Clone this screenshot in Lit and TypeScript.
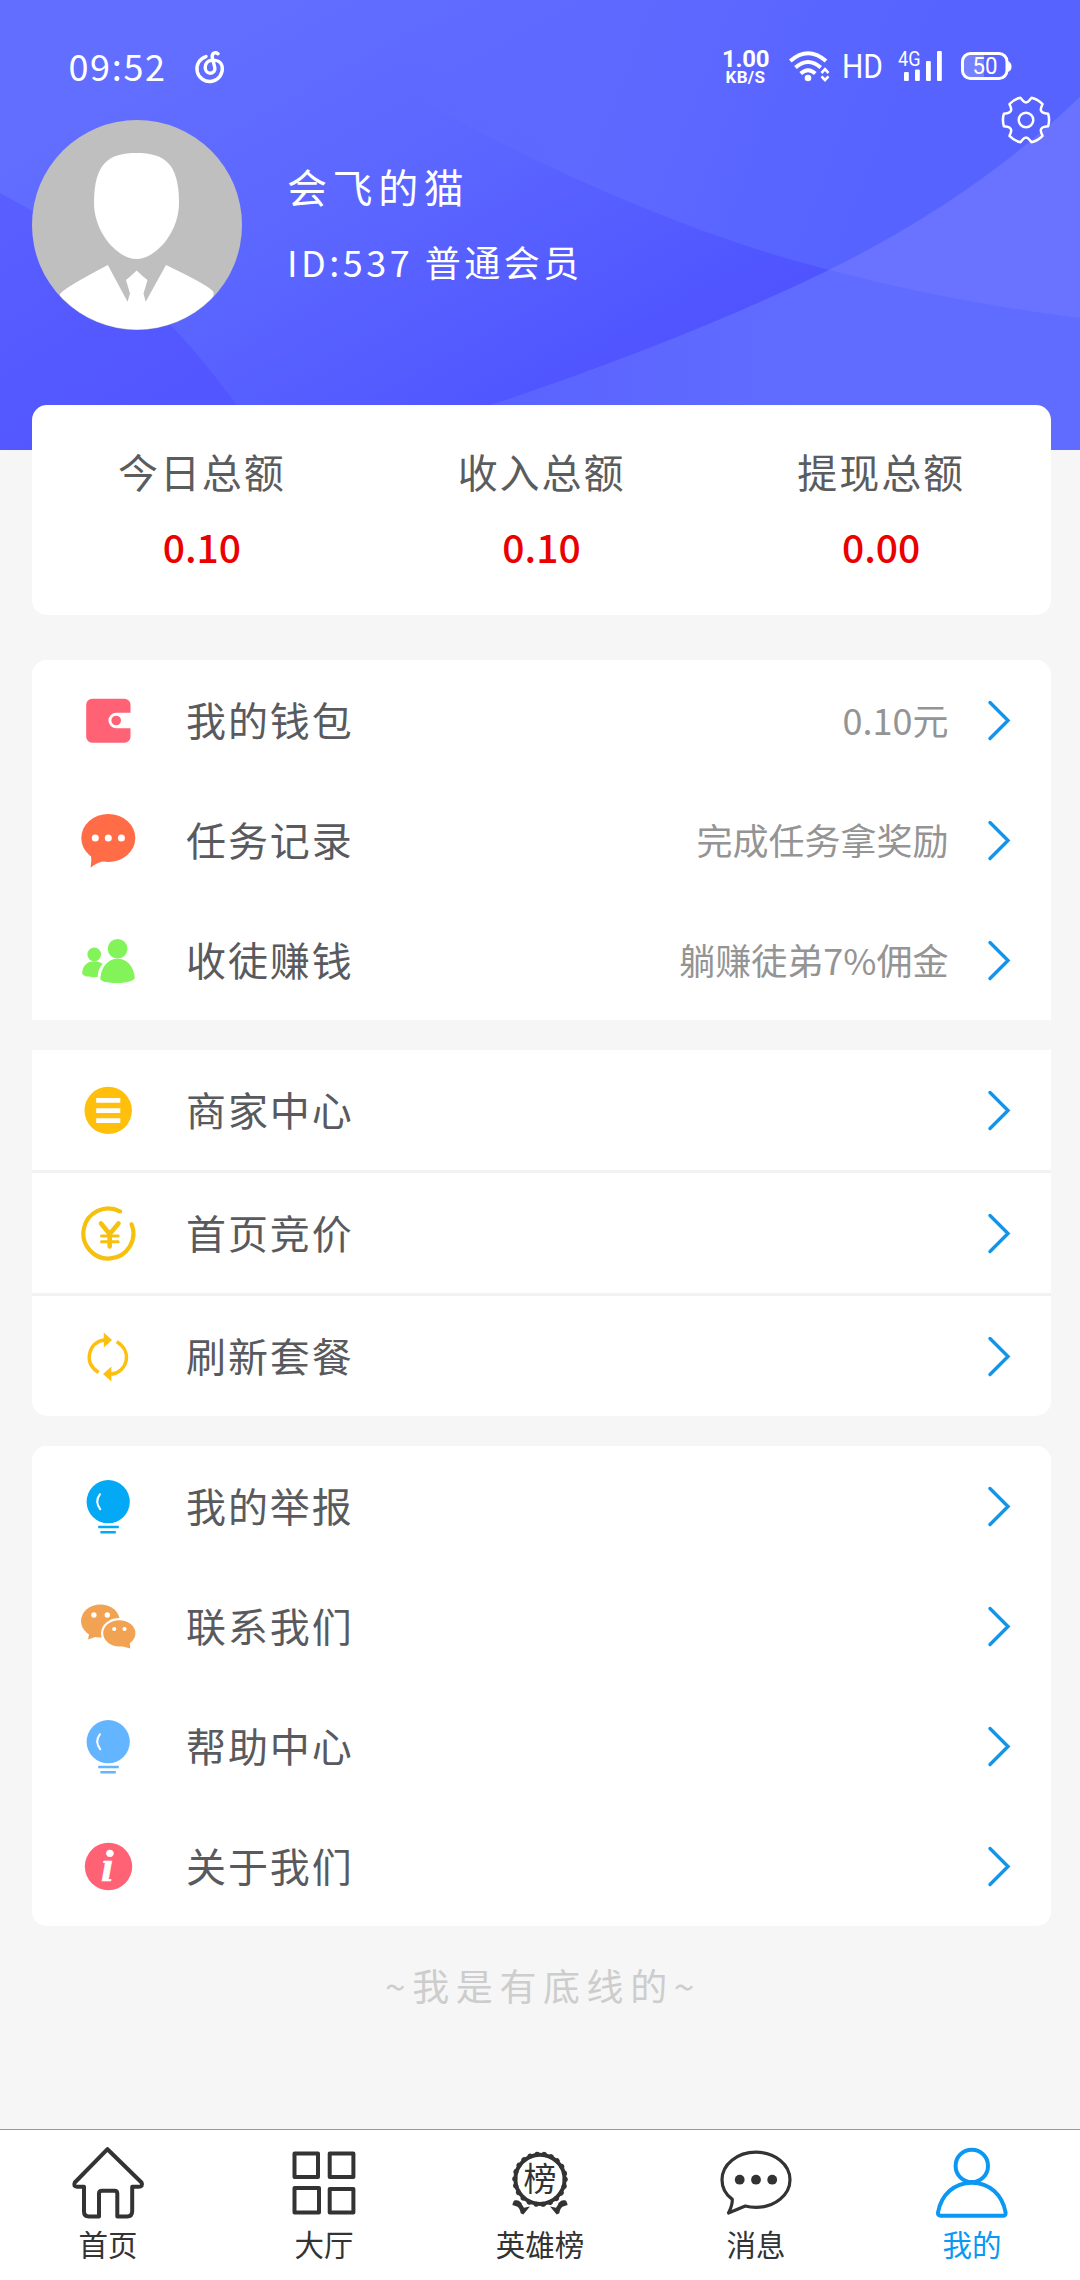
import { LitElement, html, css, svg, nothing, type SVGTemplateResult } from "lit";
import { customElement, property } from "lit/decorators.js";

const RED = "#ff6175";
const AMBER = "#ffbf0b";

const bulb = (color: string) => svg`
  <circle cx="30.2" cy="25.7" r="21.6" fill=${color} />
  <path d="M22 18.2Q16.4 25.7 22.3 33.3" fill="none" stroke="#fff" stroke-width="2" stroke-linecap="round" />
  <path d="M20.2 51H40.8M22.4 56.3H37.8" stroke=${color} stroke-width="2.6" />`;

const icons: Record<string, SVGTemplateResult> = {
  wallet: svg`
    <path fill=${RED} d="M52.5 22.7V14.7a6 6 0 0 0-6-6H14.2a6 6 0 0 0-6 6v32a6 6 0 0 0 6 6H46.5a6 6 0 0 0 6-6V38.3H38.3a7.8 7.8 0 0 1 0-15.6z" />
    <circle cx="38.2" cy="30.5" r="4.8" fill=${RED} />`,
  record: svg`
    <ellipse cx="30.3" cy="28" rx="27" ry="24" fill="#ff6c45" />
    <path fill="#ff6c45" d="M12.8 43Q14 50 12.6 57.8Q18 53 27 50.500z" />
    <g fill="#fff"><circle cx="17.3" cy="28" r="3.5" /><circle cx="30.3" cy="28" r="3.5" /><circle cx="43.4" cy="28" r="3.5" /></g>`,
  people: svg`
    <g fill="#82f359">
      <circle cx="39.6" cy="18.7" r="9.8" />
      <circle cx="16.2" cy="24.4" r="6.8" />
      <path d="M4.2 43C4.6 36 9 31.2 16 31.2c3.600 0 6.500.8 8.600 2.800C21.500 37 20 41.500 19.600 47C12 47.600 4 46.500 4.200 43z" />
      <path d="M22.300 48.500C23.500 36 30.500 28.800 39.600 28.800S55.600 36 56.800 47.500C57 50.500 49 53 39.600 53S22 51.500 22.300 48.500z" />
    </g>`,
  list: svg`
    <circle cx="30.2" cy="30.4" r="23.7" fill=${AMBER} />
    <path d="M18.200 20.300H42.300M18.200 30.600H42.300M18.200 40.700H42.300" stroke="#fff" stroke-width="4.800" />`,
  yen: svg`
    <g fill="none" stroke="#f6c00e" stroke-linecap="round" stroke-linejoin="round">
      <path d="M53.600 21.300A25 25 0 1 1 42 8.400" stroke-width="4.200" />
      <path d="M23 20.500L31.700 31L40.500 20.500M31.700 31V43.500" stroke-width="4.600" />
      <path d="M23.500 33H40.200M23.500 38.700H40.200" stroke-width="3" />
    </g>`,
  refresh: svg`
    <g fill="none" stroke="#fdbf10" stroke-width="3.400">
      <path d="M20.600 46.500C13.500 42 10 35 11.600 27.500C13.200 20 19 15 27 13.700" />
      <path d="M38.700 15.700C46 20 49.600 27 48.200 34.500C46.800 41.500 41 47.300 33 48.300" />
    </g>
    <path fill="#fdbf10" d="M25.800 6.500L34 14L25.800 21.500zM33.400 40.500L25 48L33.400 55.500z" />`,
  bulbDark: bulb("#03a9f5"),
  wechat: svg`
    <g fill="#f1a252">
      <ellipse cx="22.400" cy="25" rx="19.400" ry="16.500" />
      <path d="M11.500 36L10 43.500L20 40z" />
      <ellipse cx="41.300" cy="37.300" rx="17.200" ry="14.200" stroke="#fff" stroke-width="2.200" />
      <path d="M43 50L52.400 52.500L51.500 46z" />
    </g>
    <g fill="#fff">
      <circle cx="15.900" cy="19" r="2.700" /><circle cx="29.300" cy="19" r="2.700" />
      <circle cx="36.200" cy="33" r="2.100" /><circle cx="46.500" cy="33" r="2.100" />
    </g>`,
  bulbLight: bulb("#64b5ff"),
  info: svg`
    <circle cx="30.500" cy="30.500" r="23.700" fill=${RED} />
    <text x="29.300" y="45" text-anchor="middle" fill="#fff" stroke="#fff" stroke-width="0.600" font-family="Liberation Serif, serif" font-style="italic" font-weight="700" font-size="45">i</text>`,
};

const tabIcons: Record<string, SVGTemplateResult> = {
  home: svg`<path fill="none" stroke="#333" stroke-width="4" stroke-linejoin="round"
    d="M39.500 6.200L6.800 39.500Q5 43.600 9 43.800H16V68.500Q16 73.500 21 73.500H31V50.500Q31 47.700 34 47.700H46.500Q49.300 47.700 49.300 50.500V73.500H59Q64.200 73.500 64.200 68V43.800H70.500Q75.500 43.600 73.500 39.500Z" />`,
  grid: svg`<g fill="none" stroke="#333" stroke-width="4" stroke-linejoin="round">
    <rect x="10.500" y="10.500" width="23.500" height="23.500" /><rect x="45.700" y="10.500" width="23.700" height="23.500" />
    <rect x="10.500" y="45" width="24.500" height="24.500" /><rect x="45.700" y="46" width="23.700" height="23.500" /></g>`,
  medal: svg`
    <circle cx="40" cy="36.300" r="24.600" fill="none" stroke="#333" stroke-width="4" />
    <circle cx="40" cy="36.300" r="25.200" fill="none" stroke="#333" stroke-width="5.200" stroke-linecap="round" stroke-dasharray="0.010 7.187" />
    <path fill="#333" d="M12.300 62L14 57.700Q19 56.500 20.500 59.500L24 64.700L30 63.500L23.300 71.500L20.700 70.300Q20 65 17 63.500zM67.700 62L66 57.700Q61 56.500 59.500 59.500L56 64.700L50 63.500L56.700 71.500L59.300 70.300Q60 65 63 63.500z" />
    <path fill="none" stroke="#333" stroke-width="2" stroke-linejoin="round" d="M13.500 61.500L15 58.500L20.500 60.500L22.500 68.500M66.500 61.500L65 58.500L59.500 60.500L57.500 68.500" />
    <text x="40" y="48" text-anchor="middle" font-size="33" fill="#333">榜</text>`,
  message: svg`
    <path fill="none" stroke="#333" stroke-width="3.200" stroke-linejoin="round"
      d="M16.300 56.400C9.500 51.500 6 44.500 6 36.800C6 21.500 21.200 9.200 40 9.200S74 21.500 74 36.800S58.800 64.400 40 64.400Q34 64.400 29.300 63L12.500 70Q16.500 62 16.300 56.400z" />
    <g fill="#333"><circle cx="23.700" cy="36.700" r="4.900" /><circle cx="40" cy="36.700" r="4.900" /><circle cx="56.200" cy="36.700" r="4.900" /></g>`,
  me: svg`<g fill="none" stroke="#0a98f2" stroke-width="4">
    <circle cx="39.800" cy="22.900" r="16.200" />
    <path d="M6 69.500C9 52 22 39.700 39.800 39.700S70.500 52 73.600 69.500Q73.800 72.700 71 72.700H8.800Q5.800 72.700 6 69.500z" /></g>`,
};

/** Outline of a six-toothed gear centred on (25, 25). */
function gearPath(): string {
  const at = (deg: number, r: number) => {
    const a = (deg * Math.PI) / 180;
    return `${(25 + r * Math.cos(a)).toFixed(2)} ${(25 + r * Math.sin(a)).toFixed(2)}`;
  };
  let d = `M${at(-16, 23)}`;
  for (let i = 0; i < 6; i++) {
    const t = i * 60;
    d += `Q${at(t, 24)} ${at(t + 16, 23)}L${at(t + 20, 20)}Q${at(t + 30, 15.5)} ${at(t + 40, 20)}L${at(t + 44, 23)}`;
  }
  return d + "z";
}

@customElement("menu-row")
class MenuRow extends LitElement {
  @property() icon = "";
  @property() label = "";
  @property() hint = "";

  static styles = css`
    :host { display: flex; align-items: center; height: 120px; padding: 0 40px 0 46px; background: #fff; }
    .icon { width: 60px; height: 60px; flex: none; }
    .label { margin: 0 0 3px 48px; flex: 1; font-size: 40px; letter-spacing: 1.900px; color: #595a5e; white-space: nowrap; }
    .hint { font-size: 36px; color: #949494; white-space: nowrap; margin: 0 38.500px 3px 0; }
    .arrow { width: 24px; height: 44px; flex: none; }
  `;

  render() {
    return html`
      <svg class="icon" viewBox="0 0 60 60">${icons[this.icon]}</svg>
      <span class="label">${this.label}</span>
      ${this.hint ? html`<span class="hint">${this.hint}</span>` : nothing}
      <svg class="arrow" viewBox="0 0 24 44">
        <path d="M3 4.500L21 22.500L3 40.500" fill="none" stroke="#1294ea" stroke-width="3.400" stroke-linecap="round" />
      </svg>`;
  }
}

@customElement("app-root")
class AppRoot extends LitElement {
  static styles = css`
    :host {
      display: flex; flex-direction: column; width: 1080px; height: 2280px; overflow: hidden;
      background: #f6f6f6; font-family: "Noto Sans CJK SC", sans-serif; box-sizing: border-box;
    }
    .hero { position: relative; height: 450px; flex: none; color: #fff; }
    .backdrop { position: absolute; inset: 0; width: 1080px; height: 450px; }
    .status { position: relative; display: flex; justify-content: space-between; height: 120px; }
    .status svg { display: block; height: 120px; }
    .gear { position: absolute; left: 1001px; top: 95px; width: 50px; height: 50px; }
    .profile { position: relative; display: flex; padding-left: 32px; }
    .avatar { width: 210px; height: 210px; flex: none; }
    .who { display: flex; flex-direction: column; gap: 15px; padding: 36px 0 0 45px; }
    .name { font-size: 40px; line-height: 60px; letter-spacing: 5.600px; }
    .id { font-size: 36px; line-height: 60px; letter-spacing: 3.500px; white-space: pre; }
    .card { background: #fff; margin: 0 29px 0 32px; flex: none; }
    .totals { position: relative; display: grid; grid-template-columns: repeat(3, 1fr); height: 210px; margin-top: -45px; border-radius: 15px; box-sizing: border-box; padding-top: 36px; text-align: center; }
    .total-name { font-size: 40px; line-height: 60px; letter-spacing: 1.900px; color: #5b5c5e; }
    .total { font-size: 39px; line-height: 60px; margin-top: 15px; font-weight: 500; color: #eb0000; }
    .group { overflow: hidden; display: flex; flex-direction: column; margin-top: 30px; }
    .first { margin-top: 45px; border-radius: 15px 15px 0 0; }
    .ruled { gap: 3px; background: #f2f2f2; border-radius: 0 0 15px 15px; }
    .last { border-radius: 15px; }
    .end { text-align: center; font-size: 37px; line-height: 60px; letter-spacing: 6.600px; color: #cdcdcd; padding: 29px 0 0 6px; flex: 1; }
    .tabs { display: grid; grid-template-columns: repeat(5, 1fr); height: 151px; box-sizing: border-box; border-top: 1px solid #999; background: #fff; flex: none; }
    .tab { display: flex; flex-direction: column; align-items: center; padding-top: 13px; color: #333; font-size: 29.500px; line-height: 41px; }
    .tab svg { width: 80px; height: 80px; flex: none; }
    .active { color: #0a98f2; }
  `;

  private backdrop() {
    return html`<svg class="backdrop" viewBox="0 0 1080 450">
      <defs>
        <linearGradient id="base" gradientUnits="userSpaceOnUse" x1="280" y1="0" x2="520" y2="430">
          <stop offset="0" stop-color="#626eff" /><stop offset="0.450" stop-color="#5b66ff" /><stop offset="1" stop-color="#4f54ff" />
        </linearGradient>
        <linearGradient id="left" gradientUnits="userSpaceOnUse" x1="0" y1="190" x2="140" y2="420">
          <stop offset="0" stop-color="#595fff" /><stop offset="1" stop-color="#5156ff" />
        </linearGradient>
        <linearGradient id="upper" gradientUnits="userSpaceOnUse" x1="400" y1="60" x2="860" y2="240">
          <stop offset="0" stop-color="#616dff" stop-opacity="0" /><stop offset="0.400" stop-color="#5e69ff" /><stop offset="1" stop-color="#5663ff" />
        </linearGradient>
        <linearGradient id="low" gradientUnits="userSpaceOnUse" x1="490" y1="0" x2="800" y2="0">
          <stop offset="0" stop-color="#5a63ff" /><stop offset="1" stop-color="#606cff" />
        </linearGradient>
      </defs>
      <rect width="1080" height="450" fill="url(#base)" />
      <path d="M400 0H1080V318Q960 303 829 270Q640 222 400 90Z" fill="url(#upper)" />
      <path d="M0 193Q150 270 268 450H0Z" fill="url(#left)" />
      <path d="M350 450Q640 362 829 270Q975 198 1080 97V450Z" fill="url(#low)" />
      <path d="M829 270Q975 198 1080 97V318Q950 302 829 270Z" fill="#6a73ff" />
    </svg>`;
  }

  private statusBar() {
    return html`<div class="status">
      <svg width="240" viewBox="0 0 240 120" fill="none">
        <text x="68.500" y="80.800" font-size="36" fill="#fff" textLength="96.500">09:52</text>
        <path stroke="#fff" stroke-width="3.400" stroke-linecap="round"
          d="M206 56.600A12.700 12.700 0 1 0 222.200 67C221.300 62 217 59.700 211.500 60.200C207.500 60.700 205.200 63.700 205.200 67.500C205.200 71 207.500 73.200 210.300 73.200C213.500 73.200 215.400 70.500 214.800 67.500L212.300 57.500C211.500 53.500 215 51.500 218 53.800" />
      </svg>
      <svg width="380" viewBox="700 0 380 120" fill="#fff" font-family="Roboto, sans-serif">
        <text font-weight="700"><tspan x="722" y="66.500" font-size="24" textLength="47.500">1.00</tspan><tspan x="725.500" y="83" font-size="17" textLength="39.500">KB/S</tspan></text>
        <g fill="none" stroke="#fff" stroke-width="4">
          <path d="M790.300 61Q808 45.500 826 61M795.500 67.500Q808 56.500 820.700 67.500M800.700 73.500Q808 67 815.300 73.500" />
          <path d="M821.500 73L825 69.200L828.500 73M821.500 76.300L825 80L828.500 76.300" stroke-width="2.600" />
        </g>
        <circle cx="808" cy="78" r="3.300" />
        <text x="842" y="78" font-size="33" textLength="41" lengthAdjust="spacingAndGlyphs">HD</text>
        <text x="898" y="66" font-size="19.500" textLength="22.500" lengthAdjust="spacingAndGlyphs">4G</text>
        <rect x="904" y="72" width="4.800" height="9" rx="1" /><rect x="915" y="69.500" width="4.800" height="11.500" rx="1" />
        <rect x="926" y="61" width="4.800" height="20" rx="1" /><rect x="937" y="51" width="4.800" height="30" rx="1" />
        <path d="M971 55H984V77H971Q964 77 964 70V62Q964 55 971 55z" fill-opacity="0.200" />
        <rect x="962.500" y="53.500" width="44.500" height="25" rx="8" fill="none" stroke="#fff" stroke-width="3" />
        <path d="M1007.500 61Q1011.500 62 1011.500 66.500T1007.500 72z" />
        <text x="972.500" y="73.500" font-size="23" textLength="25" lengthAdjust="spacingAndGlyphs">50</text>
      </svg>
    </div>`;
  }

  private avatar() {
    return html`<svg class="avatar" viewBox="0 0 210 210">
      <clipPath id="round"><circle cx="105" cy="105" r="104.500" /></clipPath>
      <circle cx="105" cy="105" r="105" fill="#bfbfbf" />
      <g fill="#fff" clip-path="url(#round)">
        <path d="M104.500 33C132 33 147 43 147 83C147 113 123 139 104.500 139S62 113 62 83C62 43 77 33 104.500 33Z" />
        <path d="M28 174Q32 168 75.800 145L95.500 181.700L98 173.500L94 160Q99 156 104.700 150.500Q110 156 115.500 160L111.500 173.500L113.700 181.700L134 145Q178 166 181.500 172V210H28Z" />
      </g>
    </svg>`;
  }

  render() {
    const totals = [["今日总额", "0.10"], ["收入总额", "0.10"], ["提现总额", "0.00"]];
    const tabs = [["home", "首页"], ["grid", "大厅"], ["medal", "英雄榜"], ["message", "消息"], ["me", "我的"]];
    return html`
      <header class="hero">
        ${this.backdrop()} ${this.statusBar()}
        <div class="profile">
          ${this.avatar()}
          <div class="who">
            <div class="name">会飞的猫</div>
            <div class="id">ID:537 普通会员</div>
          </div>
        </div>
        <svg class="gear" viewBox="0 0 50 50" fill="none" stroke="#fff" stroke-width="2.500" stroke-linejoin="round">
          <path d=${gearPath()} /><circle cx="25" cy="25" r="7.300" />
        </svg>
      </header>
      <section class="card totals">
        ${totals.map(([n, v]) => html`<div><div class="total-name">${n}</div><div class="total">${v}</div></div>`)}
      </section>
      <section class="card group first">
        <menu-row icon="wallet" label="我的钱包" hint="0.10元"></menu-row>
        <menu-row icon="record" label="任务记录" hint="完成任务拿奖励"></menu-row>
        <menu-row icon="people" label="收徒赚钱" hint="躺赚徒弟7%佣金"></menu-row>
      </section>
      <section class="card group ruled">
        <menu-row icon="list" label="商家中心"></menu-row>
        <menu-row icon="yen" label="首页竞价"></menu-row>
        <menu-row icon="refresh" label="刷新套餐"></menu-row>
      </section>
      <section class="card group last">
        <menu-row icon="bulbDark" label="我的举报"></menu-row>
        <menu-row icon="wechat" label="联系我们"></menu-row>
        <menu-row icon="bulbLight" label="帮助中心"></menu-row>
        <menu-row icon="info" label="关于我们"></menu-row>
      </section>
      <div class="end">~我是有底线的~</div>
      <nav class="tabs">
        ${tabs.map(([icon, name]) => html`<div class="tab ${icon === "me" ? "active" : ""}"><svg viewBox="0 0 80 80">${tabIcons[icon]}</svg><span>${name}</span></div>`)}
      </nav>`;
  }
}
